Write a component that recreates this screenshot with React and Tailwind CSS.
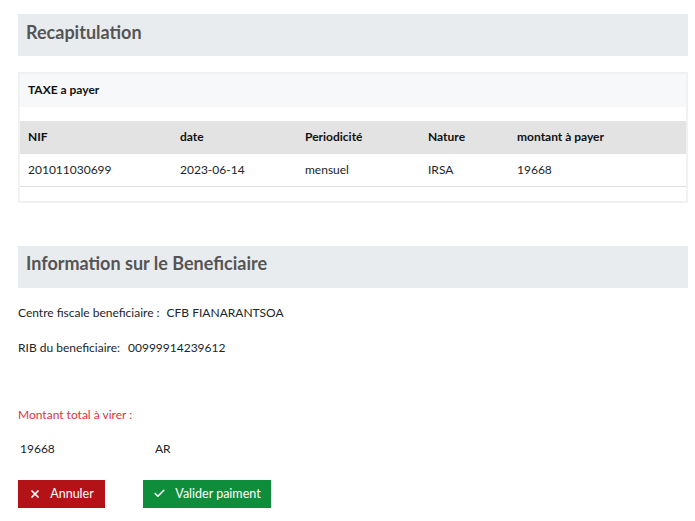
import { X, Check } from 'lucide-react'

const rows = [
  { nif: '201011030699', date: '2023-06-14', periode: 'mensuel', nature: 'IRSA', montant: '19668' },
]

function SectionTitle({ children }) {
  return (
    <div className="flex h-[42px] items-center bg-[#e9ecef] px-2 pb-[7px]">
      <h2 className="text-[18px] font-bold leading-none text-[#555555]">{children}</h2>
    </div>
  )
}

export default function App() {
  return (
    <div className="min-h-[521px] w-[695px] bg-white pl-[18px] pr-[7px] pt-[14px] font-['Lato',sans-serif] text-[12px] leading-[17px] text-[#212529]">
      <SectionTitle>Recapitulation</SectionTitle>

      <div className="mt-4 border-2 border-[#f1f1f1]">
        <div className="flex h-[33px] items-center bg-[#f7f8fa] px-2 pb-[2px] font-bold text-[#111]">
          TAXE a payer
        </div>
        <div className="py-[14px]">
          <table className="w-full border-collapse text-left">
            <thead>
              <tr className="h-[33px] bg-[#e3e3e3] text-[#111]">
                <th className="w-[160px] pb-[2px] pl-2 font-bold">NIF</th>
                <th className="w-[125px] pb-[2px] font-bold">date</th>
                <th className="w-[123px] pb-[2px] font-bold">Periodicité</th>
                <th className="w-[89px] pb-[2px] font-bold">Nature</th>
                <th className="pb-[2px] font-bold">montant à payer</th>
              </tr>
            </thead>
            <tbody>
              {rows.map((r) => (
                <tr key={r.nif} className="h-[32px] border-b border-[#dedede]">
                  <td className="pl-2">{r.nif}</td>
                  <td>{r.date}</td>
                  <td>{r.periode}</td>
                  <td>{r.nature}</td>
                  <td>{r.montant}</td>
                </tr>
              ))}
            </tbody>
          </table>
        </div>
      </div>

      <div className="mt-[43px]">
        <SectionTitle>Information sur le Beneficiaire</SectionTitle>
      </div>

      <div className="mt-[16px] flex flex-col gap-[18px]">
        <p className="flex items-center">
          <span>Centre fiscale beneficiaire :</span>
          <span className="ml-[7px]">CFB FIANARANTSOA</span>
        </p>
        <p className="flex items-center">
          <span>RIB du beneficiaire:</span>
          <span className="ml-[8px]">00999914239612</span>
        </p>
      </div>

      <p className="mt-[50px] text-[#e0343f]">Montant total à virer :</p>

      <div className="mt-[17px] flex items-center pl-[2px]">
        <span className="w-[135px]">19668</span>
        <span>AR</span>
      </div>

      <div className="mt-[23px] flex gap-[38px]">
        <button className="flex h-[28px] w-[87px] items-center justify-center gap-[9px] bg-[#b31217] text-[12.5px] text-white">
          <X size={12} strokeWidth={3.5} />
          Annuler
        </button>
        <button className="flex h-[28px] w-[128px] items-center justify-center gap-[9px] bg-[#0e8e3a] text-[12.5px] text-white">
          <Check size={13} strokeWidth={3} />
          Valider paiment
        </button>
      </div>
    </div>
  )
}
